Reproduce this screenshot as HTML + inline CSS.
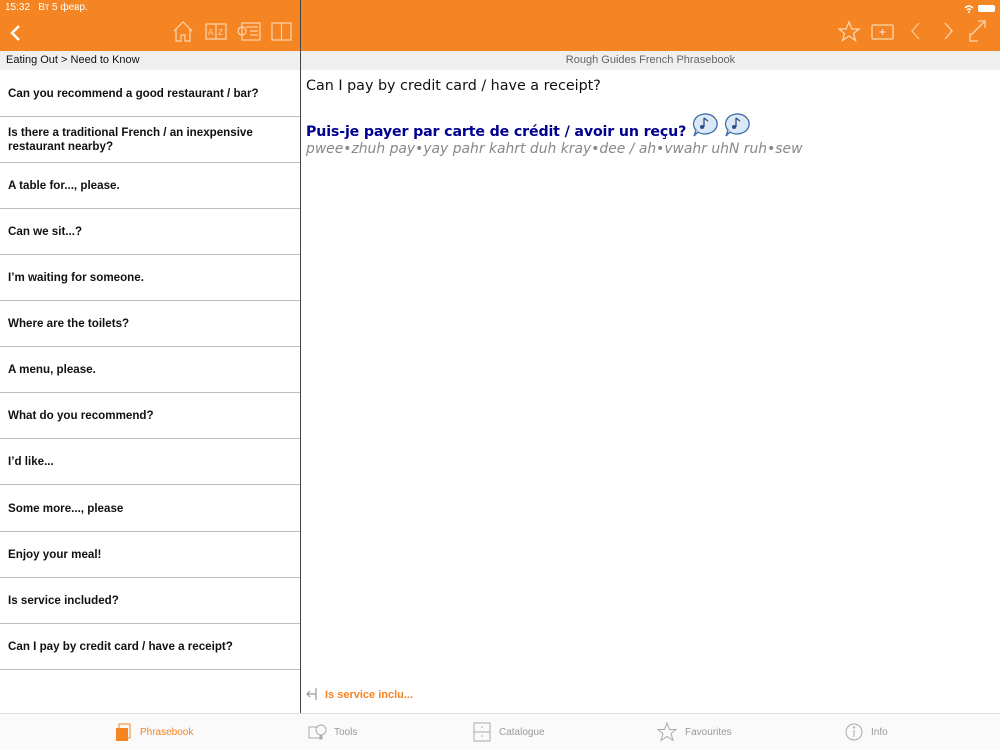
<!DOCTYPE html>
<html><head><meta charset="utf-8"><style>
*{margin:0;padding:0;box-sizing:border-box}
body{width:1000px;height:750px;position:relative;overflow:hidden;background:#fff;font-family:"Liberation Sans",sans-serif}
.hdr{position:absolute;left:0;top:0;width:1000px;height:51px;background:#F58422}
.sub{position:absolute;top:51px;height:19px;background:#efefef;font-size:11px;line-height:19px;color:#111}
.row{position:absolute;left:0;width:300px;height:47px;border-bottom:1px solid #bdbdbd;font-weight:bold;font-size:11.6px;color:#111;padding-left:8px;padding-top:2px;display:flex;align-items:center;line-height:14px}
.vline{position:absolute;left:300px;top:0;width:1px;height:713px;background:#444}
.tab{position:absolute;top:713px;height:37px;width:1000px;background:#fafafa;border-top:1px solid #ddd}
.t{position:absolute;top:727px;font-size:10px;color:#999}
svg{position:absolute}
</style></head><body>
<div class="hdr"></div>
<div style="position:absolute;left:5px;top:2px;font-size:10px;color:#fff">15:32&nbsp;&nbsp; Вт 5 февр.</div>
<svg style="left:9px;top:24px" width="14" height="18"><path d="M10 2 L3 9 L10 16" stroke="#fff" stroke-width="2.5" fill="none"/></svg>
<svg style="left:172px;top:20px" width="124" height="24" fill="none" stroke="#fbd6b0" stroke-width="1.2">
<path d="M2 11 L11 2 L20 11 M4 9 V21 H9 V15 H13 V21 H18 V9"/>
<rect x="34" y="4" width="20" height="15"/><line x1="44" y1="4" x2="44" y2="19"/><text x="36" y="15" font-size="8" fill="#fbd6b0" stroke="none">A</text><text x="46" y="15" font-size="8" fill="#fbd6b0" stroke="none">Z</text>
<rect x="70" y="3" width="18" height="17"/><line x1="74" y1="7" x2="86" y2="7"/><line x1="78" y1="11" x2="86" y2="11"/><line x1="78" y1="15" x2="86" y2="15"/><circle cx="70" cy="11" r="4"/>
<rect x="100" y="3" width="19" height="17"/><line x1="109.5" y1="3" x2="109.5" y2="20"/>
</svg>
<svg style="left:838px;top:19px" width="160" height="26" fill="none" stroke="#fbd6b0" stroke-width="1.3">
<path d="M11 3 L14 10 L21 10 L15.5 14.5 L17.5 21.5 L11 17 L4.5 21.5 L6.5 14.5 L1 10 L8 10 Z"/>
<rect x="34" y="6" width="21" height="14" rx="1"/><path d="M44.5 10 V16 M41.5 13 H47.5"/>
<path d="M81 4 L74 12 L81 20" stroke="#fbc894"/><path d="M107 4 L114 12 L107 20"/>
<path d="M140 2 H147 V9 M147 2 L133 16 M132 14 V22 H140"/>
</svg>
<svg style="left:962px;top:4px" width="36" height="9"><path d="M3 4 Q7 0 11 4 M5 6 Q7 4 9 6" stroke="#fff" fill="none" stroke-width="1.3"/><circle cx="7" cy="8" r="1" fill="#fff"/><rect x="16" y="1" width="17" height="7" rx="2" fill="#fff"/></svg>
<div class="sub" style="left:0;width:300px;padding-left:6px">Eating Out &gt; Need to Know</div>
<div class="sub" style="left:301px;width:699px;text-align:center;color:#666">Rough Guides French Phrasebook</div>
<div class="row" style="top:70px">Can you recommend a good restaurant / bar?</div>
<div class="row" style="top:116px">Is there a traditional French / an inexpensive restaurant nearby?</div>
<div class="row" style="top:162px">A table for..., please.</div>
<div class="row" style="top:208px">Can we sit...?</div>
<div class="row" style="top:254px">I’m waiting for someone.</div>
<div class="row" style="top:300px">Where are the toilets?</div>
<div class="row" style="top:346px">A menu, please.</div>
<div class="row" style="top:392px">What do you recommend?</div>
<div class="row" style="top:438px">I’d like...</div>
<div class="row" style="top:485px">Some more..., please</div>
<div class="row" style="top:531px">Enjoy your meal!</div>
<div class="row" style="top:577px">Is service included?</div>
<div class="row" style="top:623px">Can I pay by credit card / have a receipt?</div>
<div class="vline"></div>
<div style="position:absolute;left:306px;top:78px;font-family:'DejaVu Sans',sans-serif;font-size:14.3px;color:#111">Can I pay by credit card / have a receipt?</div>
<div style="position:absolute;left:306px;top:124px;font-family:'DejaVu Sans',sans-serif;font-size:14.2px;font-weight:bold;color:#000090;letter-spacing:-0.15px">Puis-je payer par carte de crédit / avoir un reçu?</div>
<svg style="left:690px;top:112px" width="64" height="26"><g fill="#dbe8f5" stroke="#3b6ea8" stroke-width="1.3"><path d="M14 2 A12 10 0 1 1 8 20 L4 24 L6 18 A12 10 0 0 1 14 2Z"/><path d="M46 2 A12 10 0 1 1 40 20 L36 24 L38 18 A12 10 0 0 1 46 2Z"/></g><path d="M14 6 V15 M14 6 L18 9 M46 6 V15 M46 6 L50 9" stroke="#2a4f80" stroke-width="1.3" fill="none"/><circle cx="12" cy="15" r="2" fill="#2a4f80"/><circle cx="44" cy="15" r="2" fill="#2a4f80"/></svg>
<div style="position:absolute;left:306px;top:141px;font-family:'DejaVu Sans',sans-serif;font-size:13.9px;font-style:italic;color:#888;white-space:nowrap">pwee•zhuh pay•yay pahr kahrt duh kray•dee / ah•vwahr uhN ruh•sew</div>
<svg style="left:304px;top:686px" width="16" height="16" fill="none" stroke="#999" stroke-width="1.2"><path d="M12 2 V14 M12 8 H3 M6 5 L3 8 L6 11"/></svg>
<div style="position:absolute;left:325px;top:689px;font-size:11px;font-weight:bold;color:#F58422">Is service inclu...</div>
<div class="tab"></div>
<svg style="left:115px;top:722px" width="16" height="20"><rect x="1" y="6" width="12" height="13" fill="#F58422"/><path d="M4 6 V2 H15 V16 H13" stroke="#F58422" fill="none"/></svg>
<div class="t" style="left:140px;color:#F58422">Phrasebook</div>
<svg style="left:308px;top:722px" width="20" height="20" fill="none" stroke="#aaa"><rect x="1" y="5" width="12" height="11"/><circle cx="13" cy="8" r="5" fill="#fafafa"/><path d="M12 13 V17 H14 V13"/></svg>
<div class="t" style="left:334px">Tools</div>
<svg style="left:473px;top:722px" width="18" height="20" fill="none" stroke="#aaa"><rect x="1" y="1" width="16" height="18"/><line x1="1" y1="10" x2="17" y2="10"/><line x1="8" y1="5" x2="10" y2="5"/><line x1="8" y1="14" x2="10" y2="14"/></svg>
<div class="t" style="left:499px">Catalogue</div>
<svg style="left:657px;top:722px" width="20" height="20" fill="none" stroke="#aaa"><path d="M10 1 L12.5 7.5 L19 7.5 L14 11.5 L16 18.5 L10 14.5 L4 18.5 L6 11.5 L1 7.5 L7.5 7.5 Z"/></svg>
<div class="t" style="left:685px">Favourites</div>
<svg style="left:845px;top:722px" width="20" height="20" fill="none" stroke="#aaa"><circle cx="9" cy="10" r="8"/><line x1="9" y1="8" x2="9" y2="15"/><circle cx="9" cy="5.5" r=".6" fill="#aaa"/></svg>
<div class="t" style="left:871px">Info</div>
</body></html>
